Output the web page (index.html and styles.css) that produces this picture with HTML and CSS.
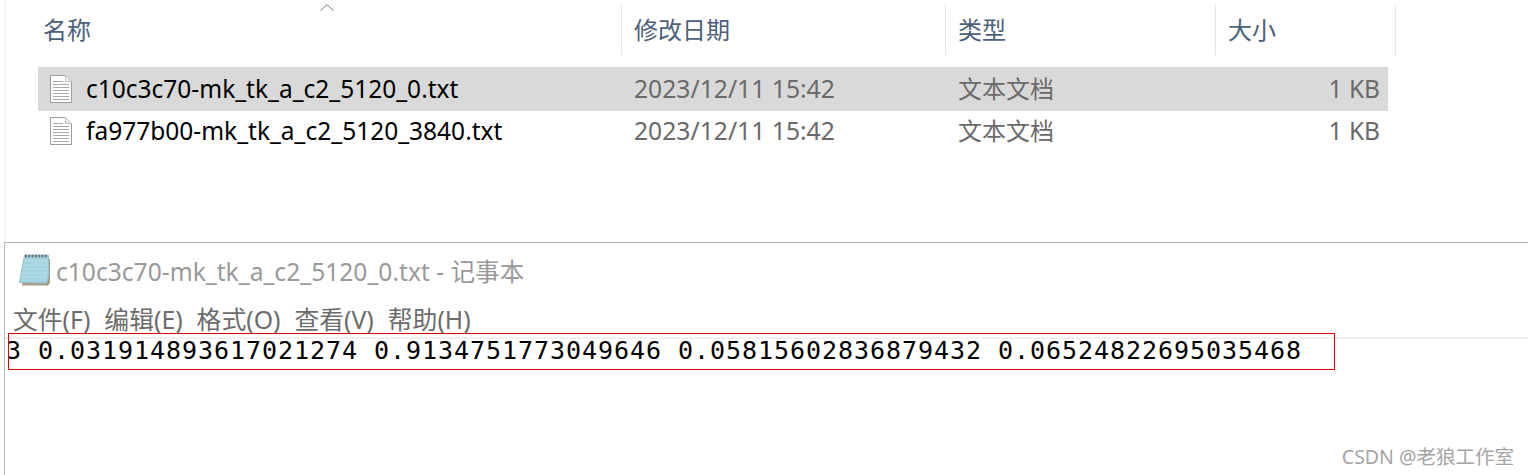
FILE: index.html
```html
<!DOCTYPE html>
<html lang="zh">
<head>
<meta charset="utf-8">
<title>c10c3c70-mk_tk_a_c2_5120_0.txt - 记事本</title>
<link rel="stylesheet" href="styles.css">
</head>
<body>
<svg class="defs" width="0" height="0" aria-hidden="true">
  <symbol id="doc" viewBox="0 0 22 28">
    <path d="M.5.5H15.500L21.500 6.500V27.500H.5Z" fill="#fff" stroke="#9c9c9c"/>
    <path d="M15.500.5V6.500H21.500Z" fill="#ececec" stroke="#c4c4c4"/>
    <path d="M3 6.500H13M3 9.500H19M3 12.500H19M3 15.500H19M3 18.500H19M3 21.500H19M3 24.500H19" stroke="#a8a8a8"/>
  </symbol>
</svg>
<section class="explorer">
  <header class="head">
    <div class="col name">名称<svg class="sort" width="14" height="7" viewBox="0 0 14 7"><path d="M.5 6.500L7 .7L13.500 6.500" fill="none" stroke="#777"/></svg></div>
    <div class="col date">修改日期</div>
    <div class="col type">类型</div>
    <div class="col size">大小</div>
  </header>
  <div class="row selected">
    <div class="cell name"><svg class="doc" width="22" height="28"><use href="#doc"/></svg>c10c3c70-mk_tk_a_c2_5120_0.txt</div>
    <div class="cell date">2023/12/11 15:42</div>
    <div class="cell type">文本文档</div>
    <div class="cell size">1 KB</div>
  </div>
  <div class="row second">
    <div class="cell name"><svg class="doc" width="22" height="28"><use href="#doc"/></svg>fa977b00-mk_tk_a_c2_5120_3840.txt</div>
    <div class="cell date">2023/12/11 15:42</div>
    <div class="cell type">文本文档</div>
    <div class="cell size">1 KB</div>
  </div>
</section>
<section class="notepad">
  <div class="titlebar">
    <svg class="np-icon" width="31" height="33" viewBox="0 0 31 33">
      <path d="M3 32.500L7 6H31V30L29 32.500Z" fill="#a79c84"/>
      <path d="M.5 29.500L5.500 2.500H29.500V23L27.500 30Z" fill="#a3d4e0" stroke="#8fc0ce"/>
      <path d="M5 8H29M4 12H29M3.500 16H28.500M3 20H28M2 24H27.500" stroke="#bce0e9"/>
      <path d="M6 3H29" stroke="#6e757c" stroke-width="3" stroke-dasharray="2 1.300"/>
    </svg>
    <span>c10c3c70-mk_tk_a_c2_5120_0.txt - 记事本</span>
  </div>
  <nav class="menu">
    <span>文件(F)</span><span>编辑(E)</span><span>格式(O)</span><span>查看(V)</span><span>帮助(H)</span>
  </nav>
  <div class="editor">
    <div class="line">3 0.031914893617021274 0.9134751773049646 0.05815602836879432 0.06524822695035468</div>
  </div>
</section>
<div class="mark">CSDN @老狼工作室</div>
</body>
</html>
```
FILE: styles.css
```css
html, body {
  margin: 0;
  padding: 0;
}
body {
  width: 1528px;
  height: 475px;
  overflow: hidden;
  background: #fff;
  position: relative;
  font-family: "Noto Sans", "Noto Sans CJK SC", sans-serif;
}
.defs {
  position: absolute;
}
.explorer {
  box-sizing: border-box;
  height: 242px;
  margin-left: 5px;
  padding-top: 4px;
  border-left: 1px solid #f2f2f2;
}
.head {
  display: flex;
  height: 51px;
  margin-bottom: 12px;
  font-size: 24px;
  line-height: 51px;
  color: #4c607a;
}
.col {
  box-sizing: border-box;
  border-right: 1px solid #e6e6e6;
  padding-left: 12px;
}
.col.name {
  width: 616px;
  padding-left: 37px;
  position: relative;
}
.col.date {
  width: 324px;
}
.col.type {
  width: 270px;
}
.col.size {
  width: 180px;
}
.sort {
  position: absolute;
  left: 314px;
  top: 0;
}
.row {
  display: flex;
  align-items: center;
  height: 42px;
  margin-left: 32px;
  width: 1350px;
  font-size: 24.5px;
  color: #6a6a6a;
}
.row.selected {
  height: 44px;
  line-height: 44px;
  background: #d9d9d9;
}
.row.second {
  line-height: 40px;
  padding-bottom: 2px;
  box-sizing: border-box;
}
.cell {
  box-sizing: border-box;
  white-space: nowrap;
}
.cell.name {
  width: 596px;
  display: flex;
  align-items: center;
  padding-left: 12px;
  color: #000;
}
.doc {
  margin-right: 14px;
  flex: none;
}
.cell.date {
  width: 324px;
  font-size: 24.7px;
}
.cell.type {
  width: 270px;
  font-size: 24px;
}
.cell.size {
  width: 160px;
  padding-right: 8px;
  text-align: right;
}
.notepad {
  box-sizing: border-box;
  height: 233px;
  margin-left: 4px;
  border-top: 1px solid #b4b4b4;
  border-left: 1px solid #b8b8b8;
}
.titlebar {
  display: flex;
  align-items: center;
  height: 57px;
  padding-left: 14px;
  padding-bottom: 4px;
  box-sizing: border-box;
  font-size: 24.6px;
  color: #999;
}
.np-icon {
  flex: none;
  margin-right: 6px;
}
.menu {
  display: flex;
  gap: 14px;
  align-items: center;
  height: 39px;
  padding-left: 8px;
  padding-bottom: 1px;
  font-size: 24.8px;
  color: #6c6c6c;
  border-bottom: 2px solid #f0f0f0;
  box-sizing: border-box;
}
.editor {
  margin-top: -6px;
  padding-left: 3px;
}
.line {
  box-sizing: border-box;
  width: 1327px;
  height: 37px;
  line-height: 34px;
  border: 1px solid #e00000;
  font-family: "DejaVu Sans Mono", monospace;
  font-size: 25px;
  letter-spacing: 0.95px;
  text-indent: -3px;
  color: #000;
  white-space: nowrap;
  overflow: hidden;
}
.mark {
  position: absolute;
  right: 14px;
  top: 441px;
  font-size: 19.5px;
  color: #a4a4a4;
}
```
